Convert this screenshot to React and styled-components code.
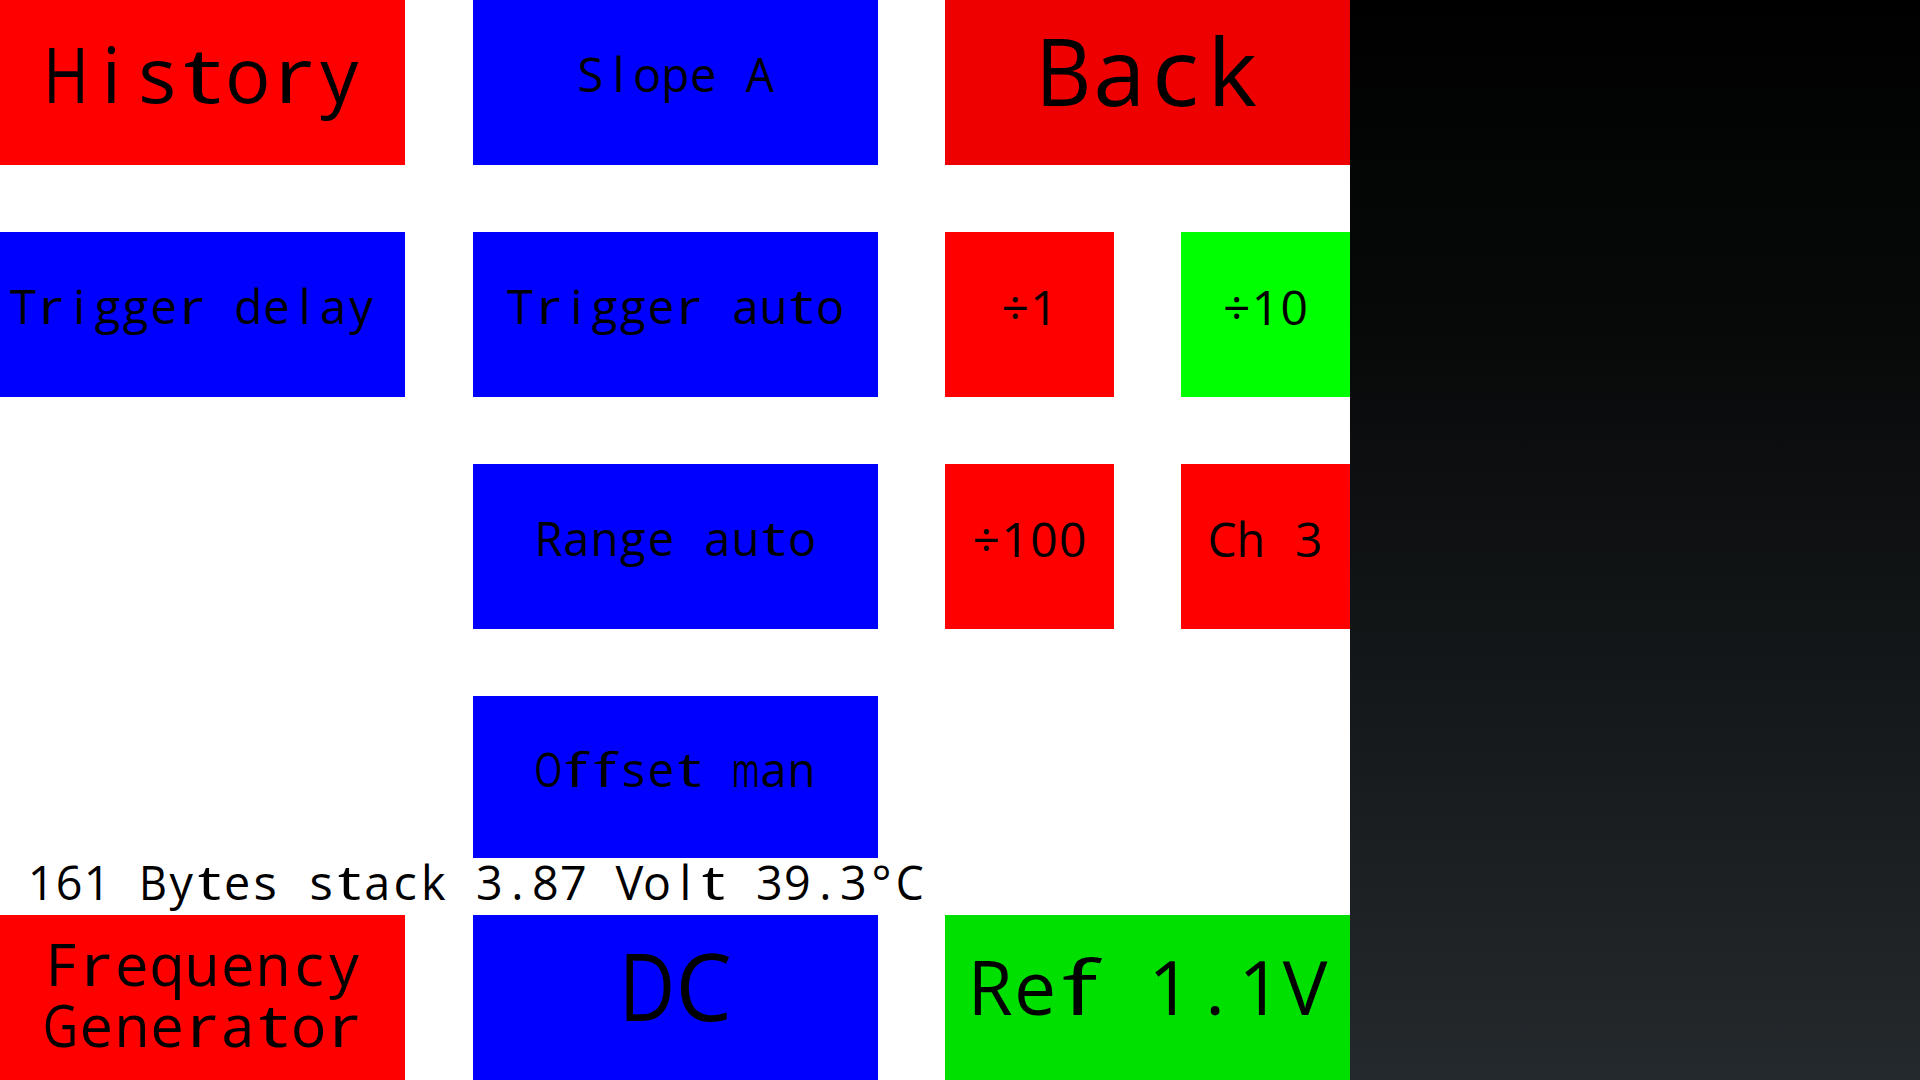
import React from "react";
import styled, { createGlobalStyle } from "styled-components";

const Global = createGlobalStyle`
  html, body { margin: 0; padding: 0; }
  body { width: 1920px; height: 1080px; overflow: hidden; background: #ffffff; }
`;

const FACE = `"Open Sans", "Noto Sans", "DejaVu Sans", sans-serif`;

/* Open Sans advance widths (em), used to fit each glyph into a monospace cell */
const ADV = {
  " ": 0.26, "÷": 0.571, ".": 0.266, "°": 0.428,
  "0": 0.571, "1": 0.571, "3": 0.571, "6": 0.571, "7": 0.571, "8": 0.571, "9": 0.571,
  A: 0.633, B: 0.648, C: 0.631, D: 0.729, F: 0.557, G: 0.726, H: 0.738,
  O: 0.779, R: 0.618, S: 0.549, T: 0.553, V: 0.592,
  a: 0.561, b: 0.615, c: 0.48, d: 0.615, e: 0.564, f: 0.344, g: 0.547,
  h: 0.618, k: 0.533, l: 0.278, m: 0.934, n: 0.618, o: 0.603, p: 0.615,
  q: 0.615, r: 0.409, s: 0.477, t: 0.352, u: 0.618, y: 0.5,
};
const CELL = 0.6;
const KEEP = new Set([" ", ".", "1", "l", "i", "°", "÷"]);

function glyphScale(ch) {
  const adv = ADV[ch] ?? CELL;
  if (adv > CELL) return +(CELL / adv).toFixed(3);
  if (!KEEP.has(ch) && adv < 0.5) return +Math.min(0.5 / adv, 1.4).toFixed(3);
  return 1;
}

const Cell = styled.span`
  display: inline-flex;
  justify-content: center;
  width: ${CELL}em;
  white-space: pre;
`;

const Glyph = styled.span`
  display: inline-block;
  white-space: pre;
  transform: scaleX(${(p) => p.$s});
  transform-origin: 50% 50%;
`;

function MonoText({ text }) {
  return (
    <>
      {Array.from(text).map((ch, i) => (
        <Cell key={i}>
          <Glyph $s={glyphScale(ch)}>{ch}</Glyph>
        </Cell>
      ))}
    </>
  );
}

const Screen = styled.div`
  display: flex;
  width: 1920px;
  height: 1080px;
`;

const Panel = styled.div`
  width: 1350px;
  height: 1080px;
  background: #ffffff;
  display: flex;
  flex-direction: column;
`;

const Side = styled.div`
  flex: 1;
  background: linear-gradient(180deg, #000000 0%, #070909 30%, #141719 62%, #24292d 100%);
`;

const ButtonGrid = styled.div`
  display: grid;
  grid-template-columns: repeat(3, 1fr);
  grid-template-rows: 165px 165px 165px 162px;
  column-gap: 67.5px;
  row-gap: 67px;
`;

const Split = styled.div`
  display: grid;
  grid-template-columns: 1fr 1fr;
  column-gap: 67px;
`;

const Empty = styled.div``;

const StatusLine = styled.div`
  height: 57px;
  line-height: 48px;
  padding-left: 27px;
  font-family: ${FACE};
  font-size: 46.7px;
  color: #000;
  white-space: pre;
`;

const BottomRow = styled.div`
  display: grid;
  grid-template-columns: repeat(3, 1fr);
  column-gap: 67.5px;
  height: 165px;
`;

const Button = styled.div`
  display: flex;
  flex-direction: column;
  align-items: center;
  justify-content: center;
  box-sizing: border-box;
  padding-right: ${(p) => p.$shift || 0}px;
  padding-bottom: ${(p) => p.$lift ?? 16}px;
  background: ${(p) => p.$bg};
  color: #000;
  font-family: ${FACE};
  font-size: ${(p) => p.$size}px;
  line-height: ${(p) => p.$lh || 1};
  overflow: hidden;
`;

const Line = styled.div`
  white-space: pre;
`;

const RED = "#ff0000";
const RED_DARK = "#ee0000";
const BLUE = "#0000ff";
const GREEN = "#00ff00";
const GREEN_DARK = "#00e000";

function Label({ lines }) {
  return lines.map((l, i) => (
    <Line key={i}>
      <MonoText text={l} />
    </Line>
  ));
}

export default function App() {
  return (
    <>
      <Global />
      <Screen>
        <Panel>
          <ButtonGrid>
            <Button $bg={RED} $size={76} $lift={17}><Label lines={["History"]} /></Button>
            <Button $bg={BLUE} $size={47}><Label lines={["Slope A"]} /></Button>
            <Button $bg={RED_DARK} $size={94} $lift={25}><Label lines={["Back"]} /></Button>

            <Button $bg={BLUE} $size={47} $shift={21}><Label lines={["Trigger delay"]} /></Button>
            <Button $bg={BLUE} $size={47}><Label lines={["Trigger auto"]} /></Button>
            <Split>
              <Button $bg={RED} $size={48}><Label lines={["÷1"]} /></Button>
              <Button $bg={GREEN} $size={48}><Label lines={["÷10"]} /></Button>
            </Split>

            <Empty />
            <Button $bg={BLUE} $size={47}><Label lines={["Range auto"]} /></Button>
            <Split>
              <Button $bg={RED} $size={48}><Label lines={["÷100"]} /></Button>
              <Button $bg={RED} $size={48}><Label lines={["Ch 3"]} /></Button>
            </Split>

            <Empty />
            <Button $bg={BLUE} $size={47}><Label lines={["Offset man"]} /></Button>
            <Empty />
          </ButtonGrid>

          <StatusLine>
            <MonoText text="161 Bytes stack 3.87 Volt 39.3°C" />
          </StatusLine>

          <BottomRow>
            <Button $bg={RED} $size={59} $lh="61px" $lift={8}>
              <Label lines={["Frequency", "Generator"]} />
            </Button>
            <Button $bg={BLUE} $size={94} $lift={26}><Label lines={["DC"]} /></Button>
            <Button $bg={GREEN_DARK} $size={75} $lift={22}><Label lines={["Ref 1.1V"]} /></Button>
          </BottomRow>
        </Panel>
        <Side />
      </Screen>
    </>
  );
}
